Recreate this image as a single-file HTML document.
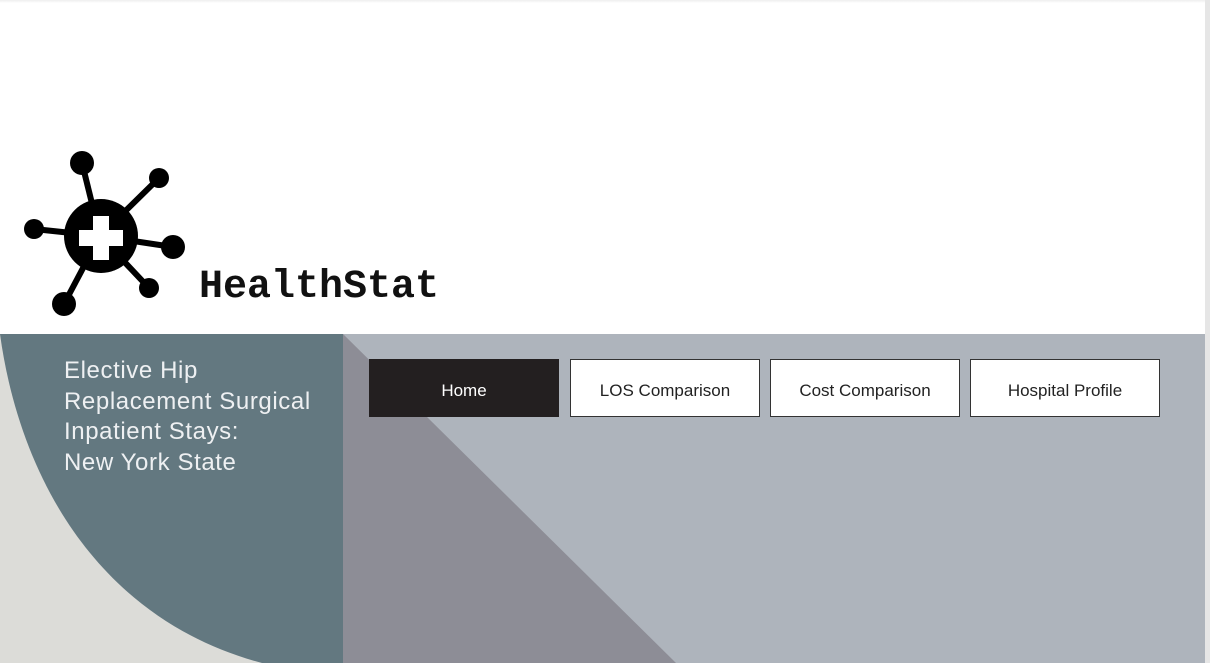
<!DOCTYPE html>
<html><head><meta charset="utf-8"><style>
html,body{margin:0;padding:0;width:1210px;height:663px;overflow:hidden;background:#fff;font-family:"Liberation Sans",sans-serif}
.strip{position:absolute;left:1205px;top:0;width:5px;height:663px;background:#e6e6e6}
.top{position:absolute;left:0;top:0;width:1205px;height:3px;background:linear-gradient(#eee,#fff)}
.title{position:absolute;left:199px;top:266px;font-family:"Liberation Mono",monospace;font-weight:bold;font-size:40px;line-height:44px;color:#111}
.h{position:absolute;left:64px;top:356px;color:#eef0f2;font-size:24px;line-height:30.5px;letter-spacing:0.6px}
.btn{position:absolute;top:359px;height:58px;width:190px;box-sizing:border-box;border:1px solid #333;background:#fff;color:#222;font-size:17px;display:flex;align-items:center;justify-content:center;padding-top:5px}
.home{background:#231f20;color:#fff;border-color:#231f20}
</style></head><body>
<div class="top"></div>
<div class="strip"></div>
<svg style="position:absolute;left:0;top:0" width="1205" height="663">
<rect x="0" y="334" width="1205" height="329" fill="#aeb4bc"/>
<rect x="0" y="334" width="343" height="329" fill="#dcdcd8"/>
<path d="M0,334 C20,480 100,620 262,663 L343,663 L343,334 Z" fill="#637880"/>
<path d="M343,334 L676,663 L343,663 Z" fill="#8d8d96"/>
<g stroke="#000" stroke-width="6">
<line x1="100" y1="236" x2="82" y2="163"/>
<line x1="100" y1="236" x2="159" y2="178"/>
<line x1="100" y1="236" x2="34" y2="229"/>
<line x1="100" y1="236" x2="173" y2="247"/>
<line x1="100" y1="236" x2="64" y2="304"/>
<line x1="100" y1="236" x2="149" y2="288"/>
</g>
<g fill="#000">
<circle cx="101" cy="236" r="37"/>
<circle cx="82" cy="163" r="12"/>
<circle cx="159" cy="178" r="10"/>
<circle cx="34" cy="229" r="10"/>
<circle cx="173" cy="247" r="12"/>
<circle cx="64" cy="304" r="12"/>
<circle cx="149" cy="288" r="10"/>
</g>
<path d="M93,216 h16 v14 h14 v16 h-14 v14 h-16 v-14 h-14 v-16 h14 Z" fill="#fff"/>
</svg>
<div class="title">HealthStat</div>
<div class="h">Elective Hip<br>Replacement Surgical<br>Inpatient Stays:<br>New York State</div>
<div class="btn home" style="left:369px">Home</div>
<div class="btn" style="left:570px">LOS Comparison</div>
<div class="btn" style="left:770px">Cost Comparison</div>
<div class="btn" style="left:970px">Hospital Profile</div>
</body></html>
